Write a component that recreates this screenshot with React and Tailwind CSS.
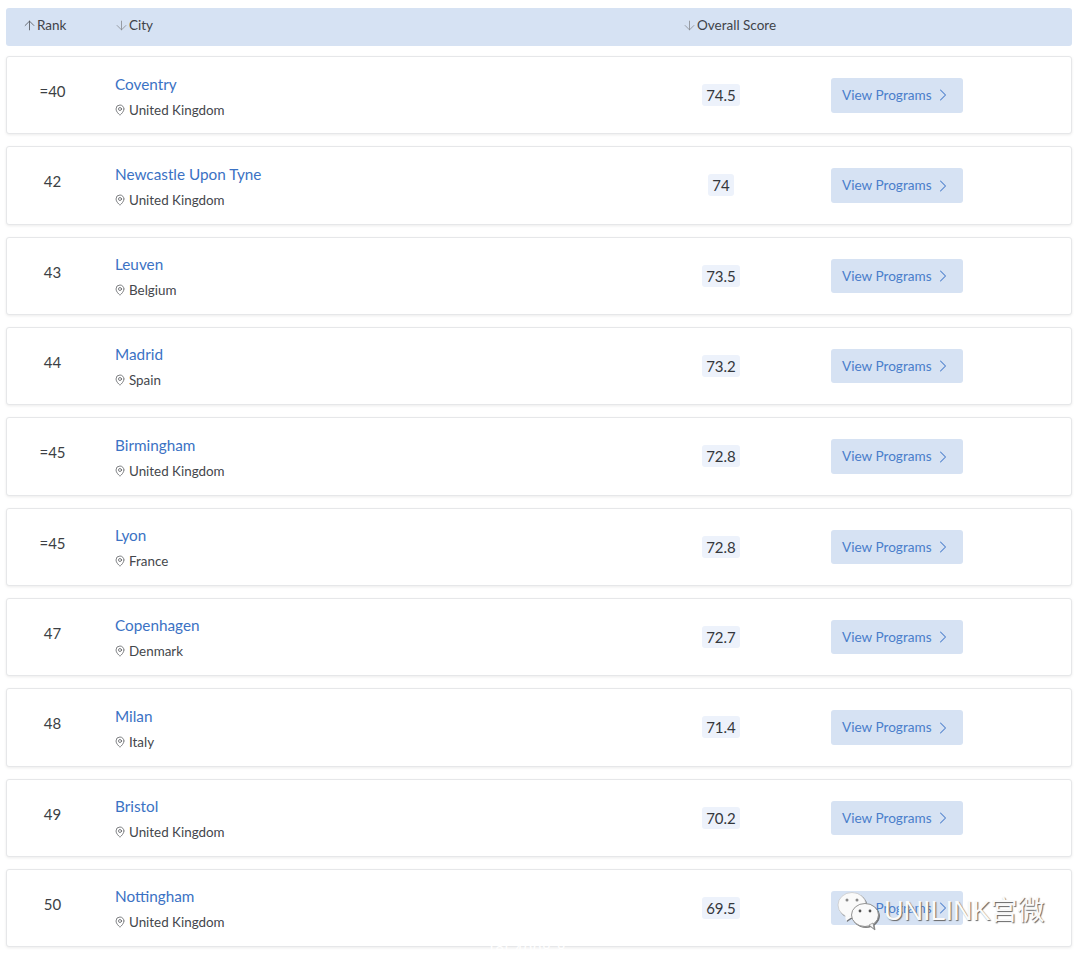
import React from 'react';
import { ArrowUp, ArrowDown, MapPin, ChevronRight } from 'lucide-react';

const rows = [
  { rank: '=40', city: 'Coventry', country: 'United Kingdom', score: '74.5' },
  { rank: '42', city: 'Newcastle Upon Tyne', country: 'United Kingdom', score: '74' },
  { rank: '43', city: 'Leuven', country: 'Belgium', score: '73.5' },
  { rank: '44', city: 'Madrid', country: 'Spain', score: '73.2' },
  { rank: '=45', city: 'Birmingham', country: 'United Kingdom', score: '72.8' },
  { rank: '=45', city: 'Lyon', country: 'France', score: '72.8' },
  { rank: '47', city: 'Copenhagen', country: 'Denmark', score: '72.7' },
  { rank: '48', city: 'Milan', country: 'Italy', score: '71.4' },
  { rank: '49', city: 'Bristol', country: 'United Kingdom', score: '70.2' },
  { rank: '50', city: 'Nottingham', country: 'United Kingdom', score: '69.5' },
];

function Row({ row }) {
  return (
    <div className="flex h-[78.33px] items-start rounded-[3px] border border-[#e6e7e9] bg-white shadow-[0_1px_3px_rgba(0,0,0,0.08)]">
      <div className="w-[91px] pt-[23px] text-center text-[15px] leading-[22px] text-[#3c3f44]">{row.rank}</div>
      <div className="w-[513px] pl-[17px] pt-[15.5px]">
        <div className="text-[15.3px] leading-[22px] text-[#3b72c4]">{row.city}</div>
        <div className="mt-[6px] flex items-center gap-[3px] text-[13.4px] leading-[18px] text-[#44474c]">
          <MapPin size={12} strokeWidth={1.5} className="-ml-[1px] text-[#55585c]" />
          {row.country}
        </div>
      </div>
      <div className="flex w-[220px] justify-center pt-[27px]">
        <span className="rounded-[3px] bg-[#edf2fb] px-[4px] text-[15px] leading-[22px] text-[#34373c]">{row.score}</span>
      </div>
      <button className="mt-[21px] flex h-[34.5px] w-[132px] items-center rounded-[3px] bg-[#d6e2f3] pl-[11px] text-[13.6px] text-[#4a7ecb]">
        View Programs
        <ChevronRight size={20} strokeWidth={1.25} className="ml-[1px]" />
      </button>
    </div>
  );
}

function WeChatMark() {
  return (
    <svg width="44" height="40" viewBox="0 0 44 40" className="drop-shadow-[1px_1px_0_rgba(90,90,90,0.8)]">
      <ellipse cx="15" cy="14" rx="14" ry="12.5" fill="#fafafa" stroke="#c4c4c4" strokeWidth="0.7" />
      <path d="M8 24l1 6 6-4z" fill="#fafafa" />
      <circle cx="10" cy="9" r="1.5" fill="#888" />
      <circle cx="20" cy="9" r="1.5" fill="#888" />
      <ellipse cx="28" cy="24" rx="13.5" ry="11.5" fill="#fafafa" stroke="#888" strokeWidth="0.9" />
      <path d="M32 34l5 4-1-6z" fill="#fafafa" stroke="#888" strokeWidth="0.7" />
      <circle cx="23" cy="20" r="1.4" fill="#555" />
      <circle cx="33" cy="20" r="1.4" fill="#555" />
    </svg>
  );
}

export default function App() {
  return (
    <div className="relative h-[959px] w-[1080px] overflow-hidden bg-white font-['Lato','Noto_Sans',sans-serif]">
      <div className="pl-[6px] pr-[8px] pt-[8px]">
        <div className="mb-[10px] flex h-[38px] items-center rounded-[3px] bg-[#d6e2f3] pb-[4px] text-[13.5px] text-[#3f4348]">
          <div className="flex w-[108px] items-center pl-[16px]">
            <ArrowUp size={15} strokeWidth={1.25} className="text-[#4a4d52]" />
            Rank
          </div>
          <div className="flex w-[568px] items-center">
            <ArrowDown size={15} strokeWidth={1.25} className="text-[#85888d]" />
            City
          </div>
          <div className="flex items-center">
            <ArrowDown size={15} strokeWidth={1.25} className="text-[#85888d]" />
            Overall Score
          </div>
        </div>
        <div className="flex flex-col gap-[12px]">
          {rows.map((row) => (
            <Row key={row.city} row={row} />
          ))}
        </div>
      </div>

      {/* watermark over the last row */}
      <div className="absolute left-[837px] top-[891px] flex items-center">
        <WeChatMark />
        <span className="ml-[3px] font-['Liberation_Sans','Noto_Sans_CJK_SC',sans-serif] text-[27px] leading-[38px] text-[#fafafa] [text-shadow:1px_1px_1px_#666]">
          UNILINK宫微
        </span>
      </div>
      <div className="absolute left-[487px] top-[940px] font-['Liberation_Sans',sans-serif] text-[15px] leading-[18px] tracking-[1px] text-white">
        Tel 4008 8
      </div>
    </div>
  );
}
